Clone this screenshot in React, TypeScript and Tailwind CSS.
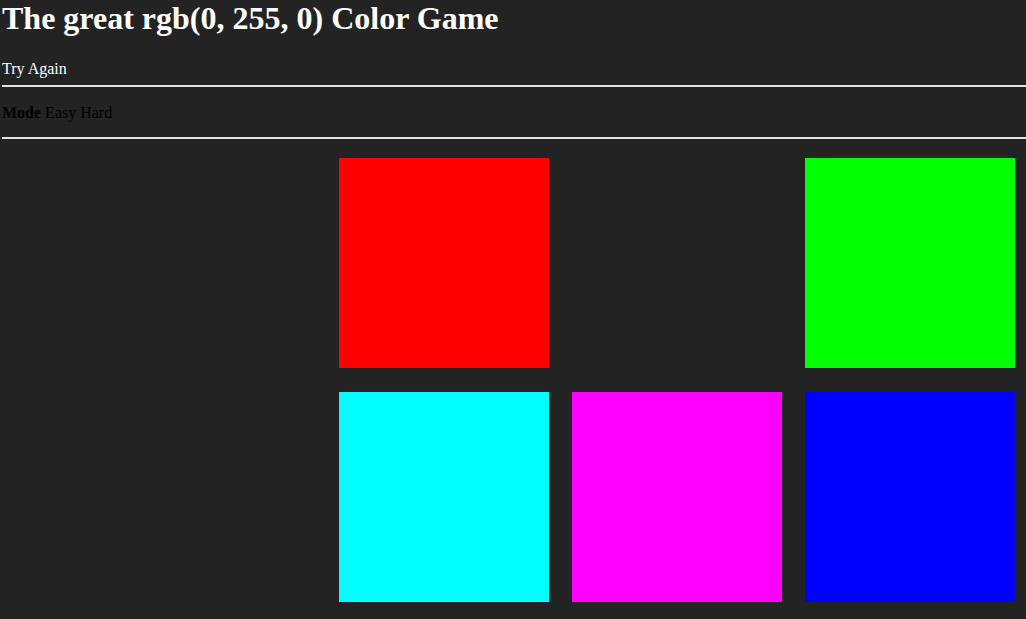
import React from "react";

const squares = [
  "bg-[#ff0000]",
  "bg-[#232323]",
  "bg-[#00ff00]",
  "bg-[#00ffff]",
  "bg-[#ff00ff]",
  "bg-[#0000ff]",
];

const App = () => {
  return (
    <div className="min-h-screen bg-[#232323] pl-[2px] font-['Liberation_Serif',serif] text-white">
      <h1 className="m-0 h-[37px] text-[32px] font-bold leading-[37px]">
        The great rgb(0, 255, 0) Color Game
      </h1>

      <div className="mt-[23px] text-base leading-[18px]">Try Again</div>
      <hr className="mt-[7px] border-t-2 border-[#e4e4e4]" />

      <div className="mt-[17px] text-base leading-[18px] text-black">
        <strong>Mode</strong> Easy Hard
      </div>
      <hr className="mt-[15px] border-t-2 border-[#e4e4e4]" />

      <div className="flex justify-end pr-[11px] pt-[19px]">
        <div className="grid grid-cols-[210px_210px_210px] gap-x-[23px] gap-y-[24px]">
          {squares.map((c, i) => (
            <div key={i} className={`h-[210px] w-[210px] ${c}`} />
          ))}
        </div>
      </div>
    </div>
  );
};

export default App;
